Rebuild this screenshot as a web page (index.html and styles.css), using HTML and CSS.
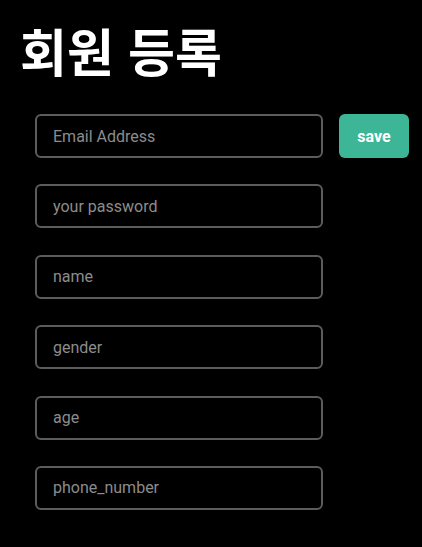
FILE: index.html
```html
<!DOCTYPE html>
<html lang="ko">
<head>
<meta charset="utf-8">
<link rel="stylesheet" href="styles.css">
</head>
<body>
<h1 class="title">회원 등록</h1>
<form class="form">
  <div class="row">
    <input class="field" type="text" placeholder="Email Address">
    <button class="save" type="button">save</button>
  </div>
  <div class="row"><input class="field" type="text" placeholder="your password"></div>
  <div class="row"><input class="field" type="text" placeholder="name"></div>
  <div class="row"><input class="field" type="text" placeholder="gender"></div>
  <div class="row"><input class="field" type="text" placeholder="age"></div>
  <div class="row"><input class="field" type="text" placeholder="phone_number"></div>
</form>
</body>
</html>
```
FILE: styles.css
```css
html, body {
  margin: 0;
  background: #000;
  color: #fff;
  font-family: Roboto, "Noto Sans CJK KR", sans-serif;
}
.title {
  margin: 0;
  padding: 18px 0 0 20px;
  height: 96px;
  box-sizing: border-box;
  font-family: "Noto Sans CJK KR", sans-serif;
  font-size: 51px;
  font-weight: 700;
  line-height: 64px;
}
.form {
  display: flex;
  flex-direction: column;
  gap: 26.4px;
  padding: 18px 0 0 35px;
}
.row {
  display: flex;
  gap: 16px;
  height: 44px;
}
.field {
  box-sizing: border-box;
  width: 288px;
  height: 44px;
  margin: 0;
  padding: 0 16px;
  background: #000;
  border: 2px solid #5c5c5c;
  border-radius: 6px;
  color: #fff;
  font-family: Roboto, sans-serif;
  font-size: 16px;
  outline: none;
}
.field::placeholder {
  color: #8c8c8c;
}
.save {
  box-sizing: border-box;
  width: 70px;
  height: 44px;
  margin: 0;
  padding: 0;
  border: none;
  border-radius: 6px;
  background: #3db597;
  color: #fff;
  font-family: Roboto, sans-serif;
  font-size: 16px;
  font-weight: 700;
}
```
